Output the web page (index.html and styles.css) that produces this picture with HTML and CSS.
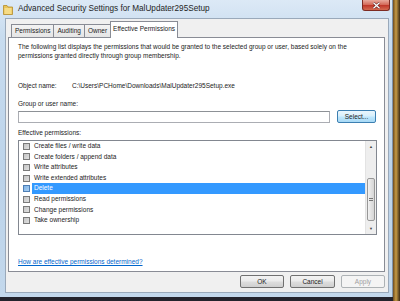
FILE: index.html
```html
<!DOCTYPE html>
<html lang="en">
<head>
    <meta charset="UTF-8">
    <title>Advanced Security Settings for MalUpdater295Setup</title>
    <link rel="stylesheet" href="styles.css">
</head>
<body>
<div class="desktop">
    <div class="window">
        <div class="titlebar">
            <svg class="folder-icon" width="10" height="11" viewBox="0 0 10 11">
                <path d="M0.5 1.5 H4 L5 3 H9.5 V10.5 H0.5 Z" fill="#e8c45a" stroke="#b58d2a" stroke-width="0.8"/>
                <path d="M1.5 4 H8.5 V10 H1.5 Z" fill="#f6dc86"/>
            </svg>
            <span class="title">Advanced Security Settings for MalUpdater295Setup</span>
            <div class="close-btn">
                <svg width="9" height="7" viewBox="0 0 9 7">
                    <path d="M1.5 0.8 L7.5 6.2 M7.5 0.8 L1.5 6.2" stroke="#5a1a1a" stroke-width="2.4"/>
                    <path d="M1.5 0.8 L7.5 6.2 M7.5 0.8 L1.5 6.2" stroke="#fff" stroke-width="1.4"/>
                </svg>
            </div>
        </div>

        <div class="client">
            <div class="tabs">
                <div class="tab">Permissions</div>
                <div class="tab">Auditing</div>
                <div class="tab">Owner</div>
                <div class="tab active">Effective Permissions</div>
            </div>

            <div class="panel">
                <p class="intro">The following list displays the permissions that would be granted to the selected group or user, based solely on the permissions granted directly through group membership.</p>

                <div class="object-row">
                    <span class="object-label">Object name:</span>
                    <span>C:\Users\PCHome\Downloads\MalUpdater295Setup.exe</span>
                </div>

                <div class="label">Group or user name:</div>
                <div class="input-row">
                    <div class="textbox"></div>
                    <div class="btn focus">Select...</div>
                </div>

                <div class="label perm-label">Effective permissions:</div>
                <div class="listbox">
                    <ul class="items">
                        <li><span class="check"></span><span class="item-text">Create files / write data</span></li>
                        <li><span class="check"></span><span class="item-text">Create folders / append data</span></li>
                        <li><span class="check"></span><span class="item-text">Write attributes</span></li>
                        <li><span class="check"></span><span class="item-text">Write extended attributes</span></li>
                        <li class="selected"><span class="check"></span><span class="item-text">Delete</span></li>
                        <li><span class="check"></span><span class="item-text">Read permissions</span></li>
                        <li><span class="check"></span><span class="item-text">Change permissions</span></li>
                        <li><span class="check"></span><span class="item-text">Take ownership</span></li>
                    </ul>
                    <div class="scrollbar">
                        <div class="arrow">&#9650;</div>
                        <div class="track">
                            <div class="thumb"><span class="grip"></span></div>
                        </div>
                        <div class="arrow">&#9660;</div>
                    </div>
                </div>

                <a class="help-link" href="#">How are effective permissions determined?</a>
            </div>

            <div class="footer">
                <div class="btn">OK</div>
                <div class="btn">Cancel</div>
                <div class="btn disabled">Apply</div>
            </div>
        </div>
    </div>
</div>
</body>
</html>
```

FILE: styles.css
```css
body {
    margin: 0;
    font-family: "Liberation Sans", Arial, sans-serif;
    background-color: #1a1a22;
}

.desktop {
    width: 400px;
    height: 301px;
    overflow: hidden;
    background:
        linear-gradient(90deg, transparent 393px, #6d4b1f 393px, #c79b45 396px, #3b2a15 400px),
        linear-gradient(180deg, #1a1a22 297px, #23232c 297px);
}

.window {
    width: 393px;
    height: 297px;
    display: flex;
    flex-direction: column;
    background: linear-gradient(180deg, #dce9f6 0%, #c8dcef 12%, #bcd3ea 60%, #c3d8ec 100%);
    border-right: 1px solid #7f93aa;
    box-sizing: border-box;
}

.titlebar {
    height: 18px;
    display: flex;
    align-items: flex-start;
    flex-shrink: 0;
}

.folder-icon {
    margin: 4px 0 0 3px;
}

.title {
    margin: 4px 0 0 5px;
    font-size: 8.2px;
    color: #1e1e1e;
    line-height: 10px;
}

.close-btn {
    margin-left: auto;
    margin-right: 2px;
    width: 28px;
    height: 11px;
    display: flex;
    align-items: center;
    justify-content: center;
    background: linear-gradient(180deg, #e9a99c 0%, #d56d5c 45%, #c0392b 55%, #d46a50 100%);
    border: 1px solid #7d2b22;
    border-top: none;
    border-radius: 0 0 3px 3px;
    box-sizing: border-box;
}

.client {
    flex: 1;
    margin: 0 3px 4px 5px;
    background-color: #f0f0f0;
    border: 1px solid #9aa9ba;
    padding: 1px 3px 0 2px;
    display: flex;
    flex-direction: column;
    font-size: 6.5px;
    color: #1b1b1b;
}

.tabs {
    display: flex;
    align-items: flex-end;
    padding-left: 3px;
    height: 17px;
    position: relative;
    z-index: 1;
}

.tab {
    height: 13px;
    padding: 0 3px;
    line-height: 12px;
    border: 1px solid #898c95;
    border-bottom: none;
    border-right: none;
    background: linear-gradient(180deg, #f3f3f3, #e5e5e5);
    box-sizing: border-box;
}

.tab.active {
    height: 17px;
    padding: 1px 2px 0;
    margin-bottom: -1px;
    background: #ffffff;
    border-right: 1px solid #898c95;
    line-height: 12px;
}

.panel {
    height: 235px;
    background-color: #fff;
    border: 1px solid #898c95;
    padding: 4px 7px 0 9px;
    box-sizing: border-box;
    display: flex;
    flex-direction: column;
}

.intro {
    margin: 0;
    line-height: 9px;
    padding-right: 20px;
}

.object-row {
    display: flex;
    margin-top: 22px;
    line-height: 8px;
}

.object-label {
    width: 54px;
}

.label {
    margin-top: 10px;
    line-height: 8px;
}

.input-row {
    display: flex;
    align-items: center;
    gap: 7px;
    margin-top: 2px;
}

.textbox {
    flex: 1;
    height: 12px;
    border: 1px solid #abadb3;
    border-top-color: #8d9196;
    box-sizing: border-box;
}

.btn {
    height: 13px;
    line-height: 11px;
    text-align: center;
    border: 1px solid #707070;
    border-radius: 2px;
    background: linear-gradient(180deg, #f2f2f2 0%, #ebebeb 45%, #dddddd 55%, #cfcfcf 100%);
    box-sizing: border-box;
    color: #1b1b1b;
}

.input-row .btn {
    width: 39px;
    margin-right: 1px;
    flex-shrink: 0;
}

.btn.focus {
    border-color: #3c7fb1;
    background: linear-gradient(180deg, #eaf6fd 0%, #d9f0fc 45%, #bee6fd 55%, #a7d9f5 100%);
}

.perm-label {
    margin-top: 6px;
}

.listbox {
    height: 95px;
    margin-top: 3px;
    border: 1px solid #828790;
    box-sizing: border-box;
    display: flex;
}

.items {
    flex: 1;
    list-style: none;
    margin: 0;
    padding: 0;
}

.items li {
    height: 10.6px;
    display: flex;
    align-items: center;
    padding-left: 4px;
}

.check {
    width: 7px;
    height: 7px;
    border: 1px solid #7a7a7a;
    background: linear-gradient(135deg, #c4c4c4, #e0e0e0);
    box-sizing: border-box;
    flex-shrink: 0;
}

.item-text {
    flex: 1;
    margin-left: 2px;
    padding-left: 2px;
    line-height: 10.6px;
}

.items li.selected .item-text {
    background-color: #3399ff;
    color: #fff;
}

.items li.selected .check {
    border-color: #4d7eb5;
    background: linear-gradient(135deg, #7fb3e6, #a9cff3);
}

.scrollbar {
    width: 11px;
    display: flex;
    flex-direction: column;
    background-color: #eeeeee;
    border-left: 1px solid #e3e3e3;
    box-sizing: border-box;
}

.arrow {
    height: 11px;
    font-size: 4px;
    line-height: 11px;
    text-align: center;
    color: #444;
}

.track {
    flex: 1;
    display: flex;
    flex-direction: column;
    justify-content: flex-end;
    padding-bottom: 2px;
}

.thumb {
    height: 41px;
    margin: 0 1px;
    border: 1px solid #979797;
    border-radius: 2px;
    background: linear-gradient(90deg, #f3f3f3, #e2e2e2 50%, #d6d6d6);
    display: flex;
    align-items: center;
    justify-content: center;
}

.grip {
    width: 4px;
    height: 4px;
    background: repeating-linear-gradient(180deg, #777 0, #777 1px, transparent 1px, transparent 2px);
}

.help-link {
    margin-top: 23px;
    color: #0066cc;
    line-height: 8px;
    align-self: flex-start;
}

.footer {
    display: flex;
    justify-content: flex-end;
    gap: 6px;
    margin-top: 3px;
}

.footer .btn {
    width: 44px;
}

.footer .btn:nth-child(2) {
    width: 45px;
}

.btn.disabled {
    color: #a0a0a0;
    border-color: #adb2b5;
    background: #f4f4f4;
}
```
